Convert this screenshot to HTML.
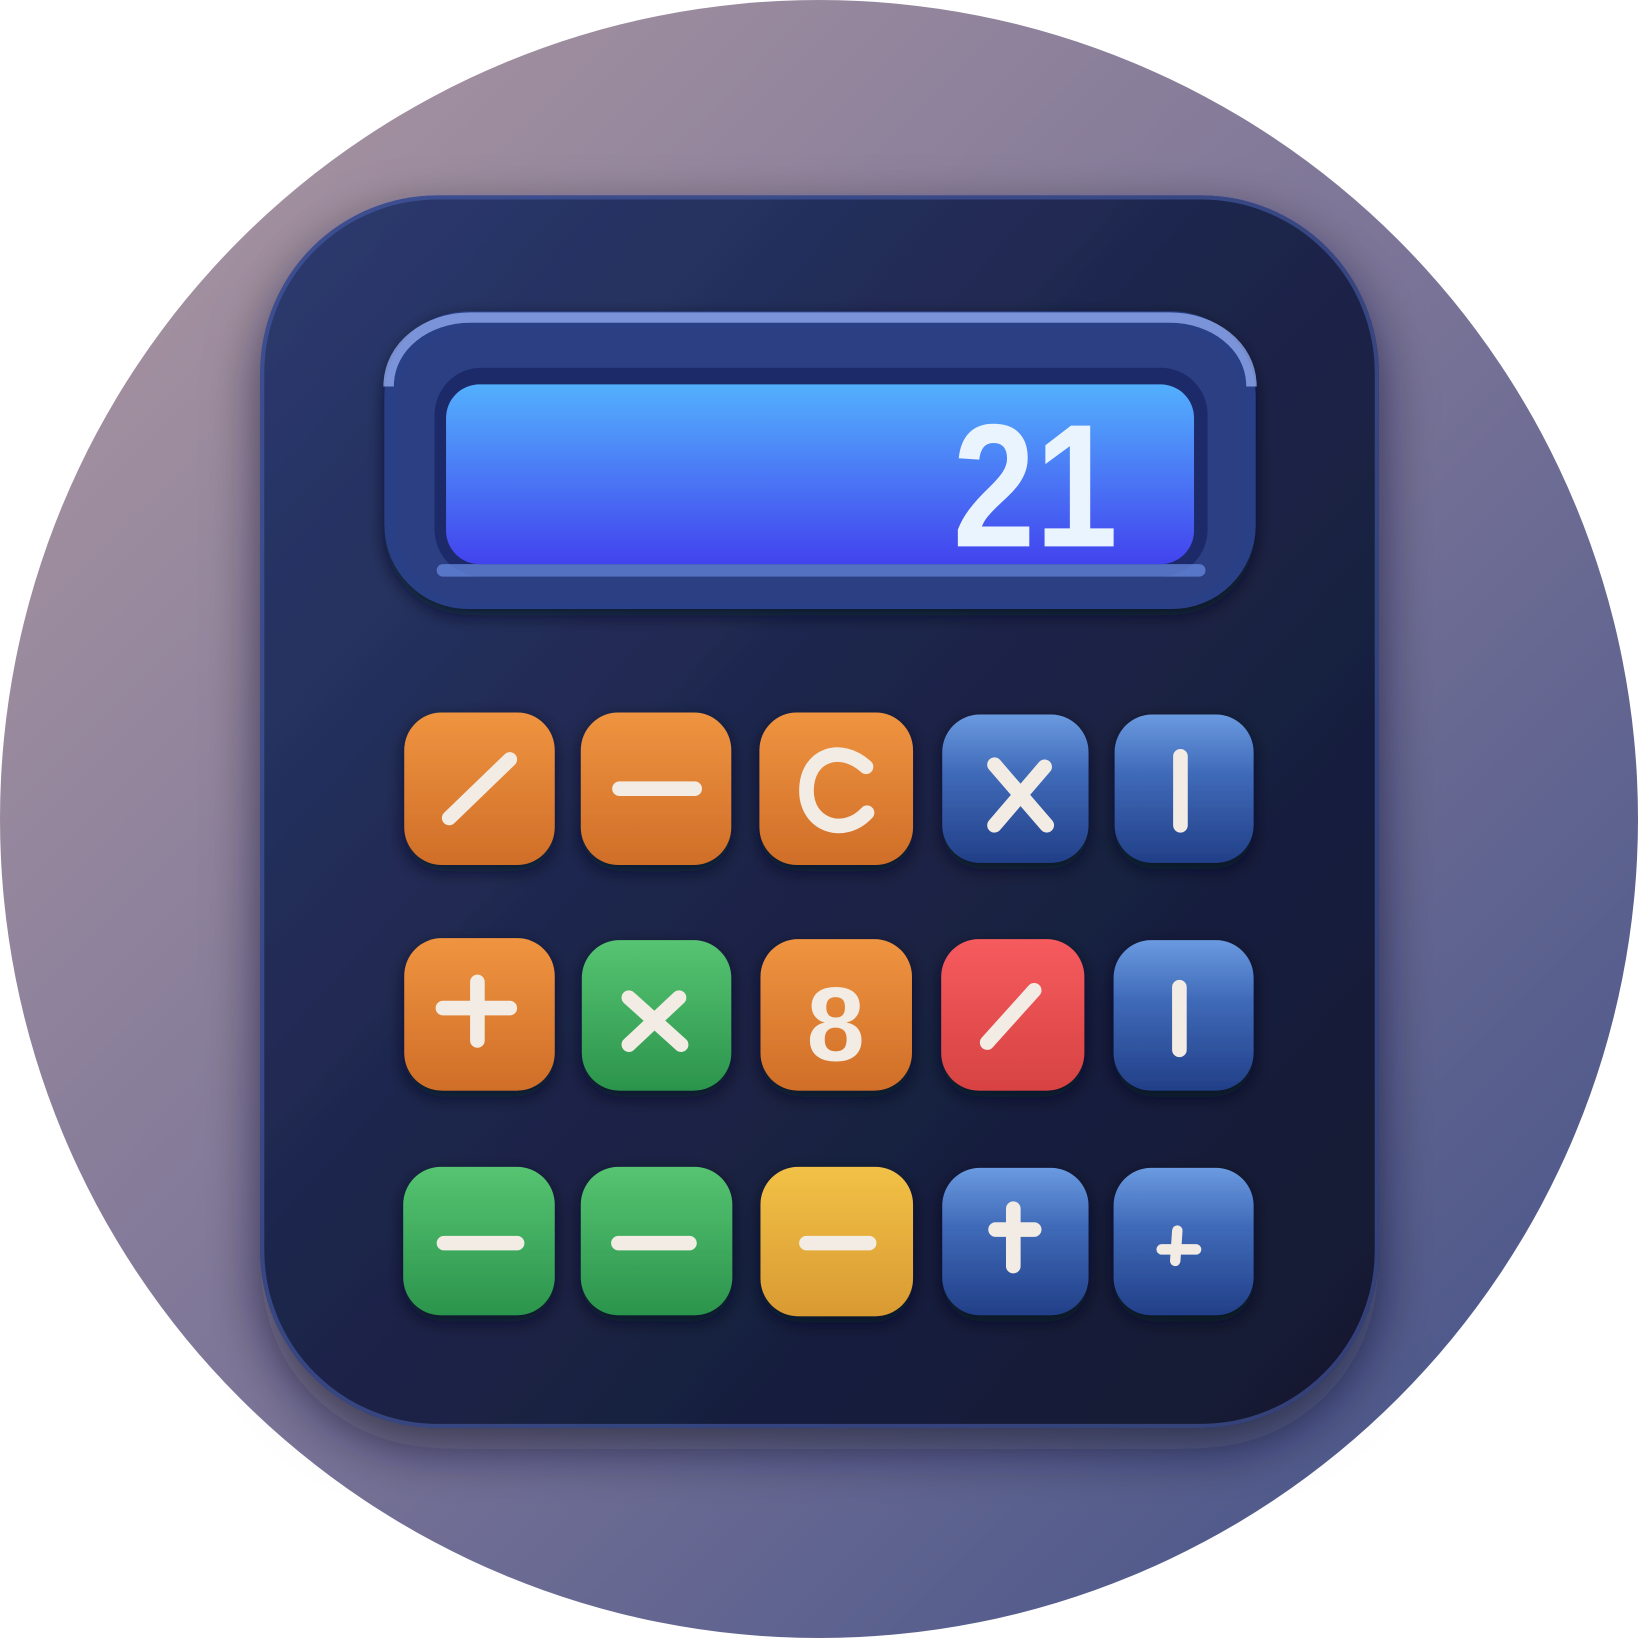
<!DOCTYPE html>
<html><head><meta charset="utf-8"><style>
html,body{margin:0;padding:0;background:#fff;}
svg{display:block}
</style></head><body>
<svg width="1638" height="1638" viewBox="0 0 1568 1568" xmlns="http://www.w3.org/2000/svg">
<defs>
<linearGradient id="bg" x1="0" y1="0" x2="1" y2="1">
<stop offset="0" stop-color="#b09aa2"/><stop offset="0.5" stop-color="#7c7598"/><stop offset="1" stop-color="#3e4f86"/>
</linearGradient>
<linearGradient id="body" x1="0" y1="0" x2="1" y2="1">
<stop offset="0" stop-color="#2c3a70"/><stop offset="0.5" stop-color="#1c2448"/><stop offset="1" stop-color="#121830"/>
</linearGradient>
<linearGradient id="scr" x1="0" y1="0" x2="0" y2="1">
<stop offset="0" stop-color="#53b0fd"/><stop offset="1" stop-color="#4243ee"/>
</linearGradient>
<linearGradient id="or" x1="0" y1="0" x2="0" y2="1"><stop offset="0" stop-color="#ef9440"/><stop offset="1" stop-color="#d06e28"/></linearGradient>
<linearGradient id="gr" x1="0" y1="0" x2="0" y2="1"><stop offset="0" stop-color="#56c472"/><stop offset="1" stop-color="#2b944c"/></linearGradient>
<linearGradient id="bl" x1="0" y1="0" x2="0" y2="1"><stop offset="0" stop-color="#6a9ae0"/><stop offset="0.4" stop-color="#3f6ab8"/><stop offset="1" stop-color="#223f88"/></linearGradient>
<linearGradient id="rd" x1="0" y1="0" x2="0" y2="1"><stop offset="0" stop-color="#f65b5e"/><stop offset="1" stop-color="#d74242"/></linearGradient>
<linearGradient id="yl" x1="0" y1="0" x2="0" y2="1"><stop offset="0" stop-color="#f2c146"/><stop offset="1" stop-color="#d99a32"/></linearGradient>
<filter id="sh" x="-20%" y="-20%" width="140%" height="140%"><feDropShadow dx="0" dy="20" stdDeviation="25" flood-color="#0a0f25" flood-opacity="0.6"/></filter>
<filter id="sh2" x="-20%" y="-20%" width="140%" height="140%"><feDropShadow dx="0" dy="6" stdDeviation="8" flood-color="#060a1c" flood-opacity="0.7"/></filter>
</defs>
<circle cx="784" cy="784" r="784" fill="url(#bg)"/>
<rect x="249" y="187" width="1071" height="1180" rx="170" fill="url(#body)" filter="url(#sh)"/>
<rect x="251" y="189" width="1067" height="1176" rx="168" fill="none" stroke="#4a5ea8" stroke-width="4" opacity="0.6"/>
<rect x="368" y="298" width="834" height="285" rx="80" fill="#2a3f86" filter="url(#sh2)"/>
<path d="M372 370 C372 330 410 304 450 304 L1120 304 C1160 304 1198 330 1198 370" fill="none" stroke="#90a9ee" stroke-width="10" opacity="0.8"/>
<rect x="380" y="314" width="810" height="262" rx="72" fill="#2b3f82"/>
<rect x="416" y="352" width="740" height="200" rx="45" fill="#1d2a6a"/>
<rect x="418" y="540" width="736" height="12" rx="6" fill="#6c8ee6" opacity="0.7"/>
<rect x="427" y="368" width="716" height="172" rx="32" fill="url(#scr)"/>
<text x="912" y="523" textLength="158" lengthAdjust="spacingAndGlyphs" font-family="Liberation Sans, sans-serif" font-weight="bold" font-size="168" fill="#eaf4ff">21</text>
<g filter="url(#sh2)">
<rect x="387" y="682" width="144" height="146" rx="36" fill="url(#or)"/>
<rect x="556" y="682" width="144" height="146" rx="36" fill="url(#or)"/>
<rect x="727" y="682" width="147" height="146" rx="36" fill="url(#or)"/>
<rect x="902" y="684" width="140" height="142" rx="36" fill="url(#bl)"/>
<rect x="1067" y="684" width="133" height="142" rx="36" fill="url(#bl)"/>
<rect x="387" y="898" width="144" height="146" rx="36" fill="url(#or)"/>
<rect x="557" y="900" width="143" height="144" rx="36" fill="url(#gr)"/>
<rect x="728" y="899" width="145" height="145" rx="36" fill="url(#or)"/>
<rect x="901" y="899" width="137" height="145" rx="36" fill="url(#rd)"/>
<rect x="1066" y="900" width="134" height="144" rx="36" fill="url(#bl)"/>
<rect x="386" y="1117" width="145" height="142" rx="36" fill="url(#gr)"/>
<rect x="556" y="1117" width="145" height="142" rx="36" fill="url(#gr)"/>
<rect x="728" y="1117" width="146" height="143" rx="36" fill="url(#yl)"/>
<rect x="902" y="1118" width="140" height="141" rx="36" fill="url(#bl)"/>
<rect x="1066" y="1118" width="134" height="141" rx="36" fill="url(#bl)"/>
</g>
<g stroke="#f3ece4" stroke-linecap="round" fill="none" stroke-width="14">
<path d="M430 783 L488 727"/>
<path d="M593 755 L665 755"/>
<path d="M829 734 C805 712 772 722 772 757 C772 790 808 802 830 778"/>
<path d="M952 732 L1002 790 M1000 734 L952 790"/>
<path d="M1130 724 L1130 790"/>
<path d="M457 940 L457 996 M424 965 L488 965"/>
<path d="M602 955 L652 1000 M650 955 L602 1000"/>
<path d="M945 998 L990 948"/>
<path d="M1129 945 L1129 1005"/>
<path d="M425 1190 L495 1190"/>
<path d="M592 1190 L660 1190"/>
<path d="M772 1190 L832 1190"/>
<path d="M970 1157 L970 1212 M953 1177 L990 1177"/>
<path d="M1127 1178 L1125 1207 M1112 1196 L1145 1196" stroke-width="10"/>
</g>
<text x="800" y="1015" text-anchor="middle" font-family="Liberation Sans, sans-serif" font-weight="bold" font-size="100" fill="#f3ece4">8</text>
</svg>
</body></html>
